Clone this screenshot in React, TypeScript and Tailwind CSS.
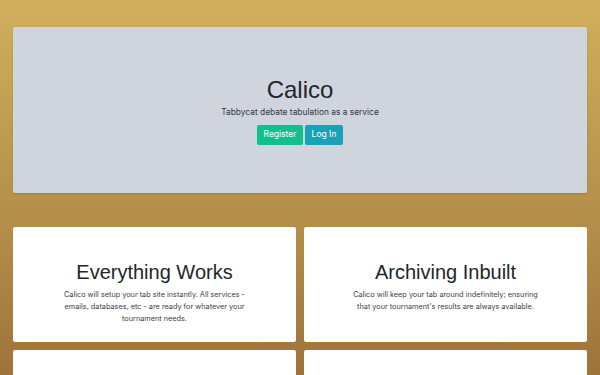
export default function App() {
  const features = [
    {
      title: 'Everything Works',
      body: 'Calico will setup your tab site instantly. All services - emails, databases, etc - are ready for whatever your tournament needs.',
    },
    {
      title: 'Archiving Inbuilt',
      body: "Calico will keep your tab around indefinitely; ensuring that your tournament's results are always available.",
    },
    { title: '', body: '' },
    { title: '', body: '' },
  ];

  return (
    <main className="min-h-screen w-full bg-gradient-to-b from-[#d1af5c] via-[#b08a47] to-[#8f5c2e] px-[13px] pt-[27px] pb-8 font-['Inter',sans-serif]">
      {/* Hero */}
      <section className="flex h-[166px] flex-col items-center justify-center rounded-[2px] bg-[#d0d5dd] shadow-sm">
        <h1 className="font-['Liberation_Sans',Arial,sans-serif] text-[24px] leading-[28px] text-[#22262b]">Calico</h1>
        <p className="mt-[2px] text-[8.4px] leading-[12px] text-[#33373d]">Tabbycat debate tabulation as a service</p>
        <div className="mt-[7px] flex gap-[2px]">
          <button className="h-[20px] w-[46px] rounded-[2px] bg-[#10c08d] text-[8.5px] text-white">Register</button>
          <button className="h-[20px] w-[38px] rounded-[2px] bg-[#17a2b8] text-[8.5px] text-white">Log In</button>
        </div>
      </section>

      {/* Features */}
      <section className="mt-[34px] grid grid-cols-2 gap-[8px]">
        {features.map((f, i) => (
          <div key={i} className="flex h-[115px] flex-col items-center rounded-[2px] bg-white px-[20px] pt-[33px] text-center">
            <h2 className="font-['Liberation_Sans',Arial,sans-serif] text-[20px] leading-[24px] text-[#22262b]">{f.title}</h2>
            <p className="mt-[5px] max-w-[192px] text-[7.3px] leading-[12px] text-[#3a3e44]">{f.body}</p>
          </div>
        ))}
      </section>
    </main>
  );
}
